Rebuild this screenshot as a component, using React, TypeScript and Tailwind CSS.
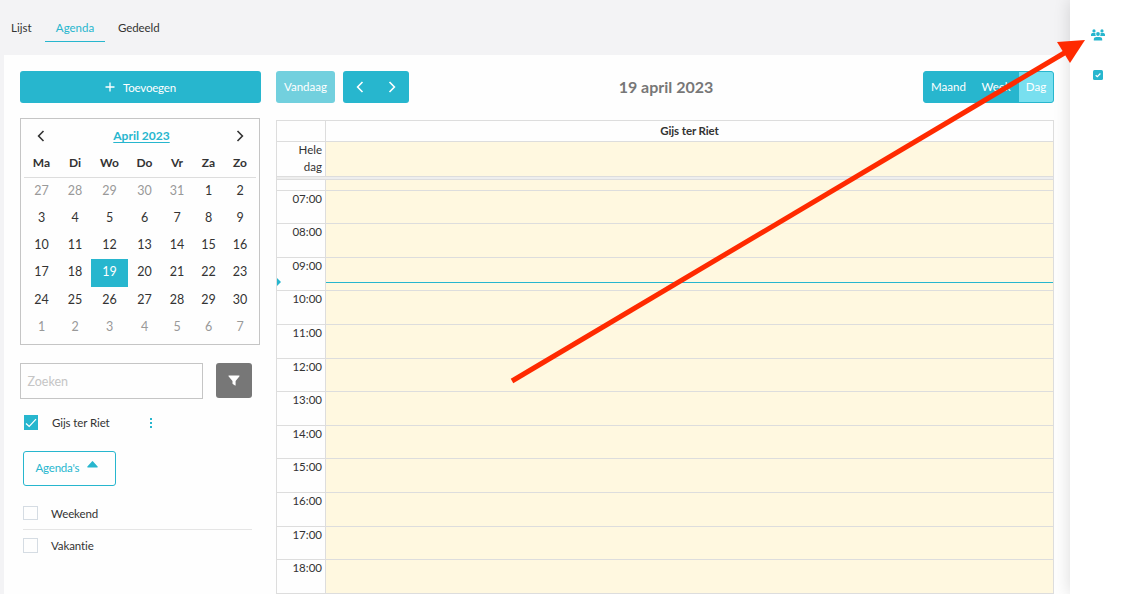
const weekdays = ["Ma", "Di", "Wo", "Do", "Vr", "Za", "Zo"];

const weeks = [
  [27, 28, 29, 30, 31, 1, 2],
  [3, 4, 5, 6, 7, 8, 9],
  [10, 11, 12, 13, 14, 15, 16],
  [17, 18, 19, 20, 21, 22, 23],
  [24, 25, 26, 27, 28, 29, 30],
  [1, 2, 3, 4, 5, 6, 7],
];

const hours = [
  { label: "07:00", height: "h-[33px]" },
  { label: "08:00", height: "h-[34px]" },
  { label: "09:00", height: "h-[33px]" },
  { label: "10:00", height: "h-[34px]" },
  { label: "11:00", height: "h-[34px]" },
  { label: "12:00", height: "h-[33px]" },
  { label: "13:00", height: "h-[34px]" },
  { label: "14:00", height: "h-[33px]" },
  { label: "15:00", height: "h-[34px]" },
  { label: "16:00", height: "h-[34px]" },
  { label: "17:00", height: "h-[33px]" },
  { label: "18:00", height: "h-[34px]" },
];

const calendarGrid = "grid grid-cols-[35px_32px_37px_33px_32px_31px_32px]";

const Chevron = ({ dir }: { dir: "left" | "right" }) => (
  <svg viewBox="0 0 8 12" fill="none" stroke="currentColor" strokeWidth="1.6" className="w-2 h-3">
    <path d={dir === "left" ? "M6.5 1 1.6 6l4.9 5" : "M1.5 1l4.9 5-4.9 5"} />
  </svg>
);

const Tabs = () => (
  <nav className="flex h-[55px] pt-[14px] pl-[11px] text-[11.5px] leading-[28px]">
    <span className="h-7">Lijst</span>
    <span className="h-7 w-[60px] ml-[13px] pl-px text-center text-[#27b6ce] border-b border-[#27b6ce]">Agenda</span>
    <span className="h-7 ml-[13.5px] tracking-[-0.1px]">Gedeeld</span>
  </nav>
);

const MiniCalendar = () => (
  <div className="w-60 h-[227px] mt-[15px] border border-[#c5c5c5] px-[3px] text-[12px]">
    <div className="flex items-center justify-between h-8 pt-[2px] pl-[13px] pr-[12px]">
      <Chevron dir="left" />
      <span className="pl-[2px] font-bold text-[#27b6ce] underline underline-offset-2">April 2023</span>
      <Chevron dir="right" />
    </div>
    <div className={`${calendarGrid} h-[27px] mb-[-0.5px] border-b border-[#dddddd] font-bold text-center leading-[24px]`}>
      {weekdays.map((day) => <span key={day}>{day}</span>)}
    </div>
    {weeks.map((week, w) => (
      <div key={w} className={`${calendarGrid} h-[27.25px] text-center text-[12.5px] leading-[26px]`}>
        {week.map((day, d) => {
          const outside = (w === 0 && day > 7) || w === 5;
          const selected = w === 3 && day === 19;
          return (
            <span key={d} className={selected ? "bg-[#27b6ce] text-white" : outside ? "text-[#999999]" : ""}>
              {day}
            </span>
          );
        })}
      </div>
    ))}
  </div>
);

const Sidebar = () => (
  <aside className="w-[241px] shrink-0">
    <button className="flex items-center justify-center w-full h-8 rounded-[3px] bg-[#27b6ce] text-white text-[11.5px]">
      <svg viewBox="0 0 10 10" stroke="currentColor" strokeWidth="1.3" className="w-[10px] h-[10px] mr-2">
        <path d="M5 .5v9M.5 5h9" />
      </svg>
      <span className="pt-[2px] tracking-[-0.2px]">Toevoegen</span>
    </button>

    <MiniCalendar />

    <div className="flex mt-[18px] gap-[13px]">
      <div className="w-[183px] h-9 border border-[#c5c5c5] pl-[6.5px] text-[12.5px] leading-[35px] text-[#c5c5c5]">Zoeken</div>
      <button className="flex items-center justify-center w-9 h-[35px] rounded-[3px] bg-[#777777] text-white">
        <svg viewBox="0 0 12 11" fill="currentColor" className="w-3 h-[11px]">
          <path d="M1 .5h10c.5 0 .7.6.3 1L7.600 6v4.300c0 .4-.3.5-.6.3L4.800 9c-.2-.2-.3-.4-.3-.6V6L.7 1.500C.3 1.100.5.5 1 .5Z" />
        </svg>
      </button>
    </div>

    <div className="flex items-center h-[15px] mt-[16px] pl-1 text-[11.5px]">
      <span className="flex items-center justify-center w-[14px] h-[15px] bg-[#27b6ce]">
        <svg viewBox="0 0 12 10" fill="none" stroke="white" strokeWidth="1.2" className="w-3 h-[10px]">
          <path d="M1 5.500 4.200 8.500 11 1.200" />
        </svg>
      </span>
      <span className="w-[113px] pl-[14px] pt-px tracking-[-0.1px]">Gijs ter Riet</span>
      <svg viewBox="0 0 2 10" fill="#27b6ce" className="w-[2px] h-[10px] ml-[-1px] mt-px">
        <path d="M0 0h2v2H0zM0 4h2v2H0zM0 8h2v2H0z" />
      </svg>
    </div>

    <button className="flex w-[93px] h-[35px] mt-[21px] ml-[3px] pl-[11.5px] pt-[7px] border border-[#27b6ce] rounded-[3px] text-[#27b6ce] text-[11.5px]">
      <span className="tracking-[-0.2px]">Agenda's</span>
      <svg viewBox="0 0 11 7" fill="currentColor" className="w-[11px] h-[7px] ml-2 mt-[2px]">
        <path d="M4.900.4.400 5.500C0 6 .2 6.500.8 6.500h9.400c.6 0 .8-.5.4-1L6.100.4a.8.8 0 0 0-1.200 0Z" />
      </svg>
    </button>

    <div className="w-[229px] ml-[3px] text-[11.5px] tracking-[-0.1px]">
      <div className="flex h-11 pt-5 border-b border-[#e5e5e5]">
        <span className="w-[15px] h-[14px] border border-[#d5dce3]" />
        <span className="pl-[13px] leading-[15px]">Weekend</span>
      </div>
      <div className="flex pt-2">
        <span className="w-[15px] h-[15px] border border-[#d5dce3]" />
        <span className="pl-[13px] leading-[15px]">Vakantie</span>
      </div>
    </div>
  </aside>
);

const Toolbar = () => (
  <div className="grid grid-cols-3 items-center h-8 text-[11.5px] text-white">
    <div className="flex gap-2">
      <button className="w-[59px] h-8 rounded-[3px] bg-[#72d0de]">Vandaag</button>
      <div className="flex items-center w-[66px] h-8 rounded-[3px] bg-[#27b6ce] pl-[13px] gap-6">
        <Chevron dir="left" />
        <Chevron dir="right" />
      </div>
    </div>
    <h2 className="pl-[2px] text-center text-[16px] font-bold text-[#777777]">19 april 2023</h2>
    <div className="flex justify-self-end w-[131px] h-8 rounded-[3px] border border-[#27b6ce] bg-[#27b6ce] overflow-hidden text-center leading-[30px]">
      <span className="w-[49px]">Maand</span>
      <span className="w-[46px]">Week</span>
      <span className="flex-1 bg-[#78dfef]">Dag</span>
    </div>
  </div>
);

const DayView = () => (
  <div className="relative mt-[17px] border-l border-t border-r border-[#dddddd] text-[11.5px]">
    <div className="flex h-[21px] border-b border-[#dddddd]">
      <div className="w-[49px] border-r border-[#dddddd]" />
      <div className="flex-1 text-center font-bold leading-[20px] tracking-[-0.1px]">Gijs ter Riet</div>
    </div>
    <div className="flex h-[35px] border-b border-[#dddddd]">
      <div className="w-[49px] pr-[3px] border-r border-[#dddddd] text-right leading-[17px]">
        <div className="-mt-px">Hele<br />dag</div>
      </div>
      <div className="flex-1 bg-[#fff8e0]" />
    </div>
    <div className="h-[3px] bg-[#eeeeee] border-b border-[#dddddd]" />
    <div className="flex h-[11px] border-b border-[#dddddd]">
      <div className="w-[49px] border-r border-[#dddddd]" />
      <div className="flex-1 bg-[#fff8e0]" />
    </div>
    {hours.map(({ label, height }) => (
      <div key={label} className={`flex border-b border-[#dddddd] ${height}`}>
        <div className="w-[49px] pr-[3px] border-r border-[#dddddd] text-right leading-[15px]">{label}</div>
        <div className="flex-1 bg-[#fff8e0]" />
      </div>
    ))}

    {/* current time */}
    <div className="absolute left-[49px] right-0 top-[161px] h-px bg-[#27b6ce]" />
    <div className="absolute left-0 top-[157px] border-y-4 border-l-4 border-y-transparent border-l-[#27b6ce]" />
  </div>
);

const App = () => {
  return (
    <div className="relative flex w-[1124px] h-[594px] overflow-hidden bg-[#f3f3f5] text-[#333333] font-[Lato,sans-serif]">
      <main className="w-[1070px]">
        <Tabs />
        <div className="flex h-[539px] ml-1 pt-4 pl-4 pr-4 bg-[#fefefe]">
          <Sidebar />
          <section className="flex-1 ml-[15px]">
            <Toolbar />
            <DayView />
          </section>
        </div>
      </main>
      <div className="relative flex flex-col items-center w-[54px] pt-7 pl-[2px] gap-7 bg-white text-[#27b6ce] shadow-[0_0_16px_rgba(0,0,0,0.14)]">
        <svg viewBox="0 0 14 12" fill="currentColor" className="w-[14px] h-3 mt-px">
          <circle cx="3" cy="1.900" r="1.600" />
          <circle cx="11" cy="1.900" r="1.600" />
          <circle cx="7" cy="5" r="1.900" />
          <path d="M0 7V5.700C0 4.700.8 4 1.800 4h1.700c.5 0 .8.1 1.100.4C4.200 5.400 4.400 6.300 5 7ZM14 7V5.700c0-1-.8-1.700-1.800-1.700h-1.700c-.5 0-.8.1-1.100.4.4 1 .2 1.900-.4 2.600ZM2.800 11.500V10.300C2.800 8.800 4 8 5.400 8h3.200c1.400 0 2.600.8 2.600 2.300v1.200Z" />
        </svg>
        <svg viewBox="0 0 10 10" fill="none" className="w-[10px] h-[10px] mt-[1px]">
          <rect width="10" height="10" rx="1.500" fill="currentColor" />
          <path d="M2.700 5.200 4.300 6.700 7.400 3.500" stroke="white" strokeWidth="1.2" />
        </svg>
      </div>

      {/* annotation arrow */}
      <svg viewBox="0 0 1124 594" className="absolute inset-0 w-[1124px] h-[594px] pointer-events-none">
        <path d="M512 381 1066 52" stroke="#ff2a00" strokeWidth="5" />
        <path d="M1085 40 1057 42 1070 63Z" fill="#ff2a00" />
      </svg>
    </div>
  );
};

export default App;
